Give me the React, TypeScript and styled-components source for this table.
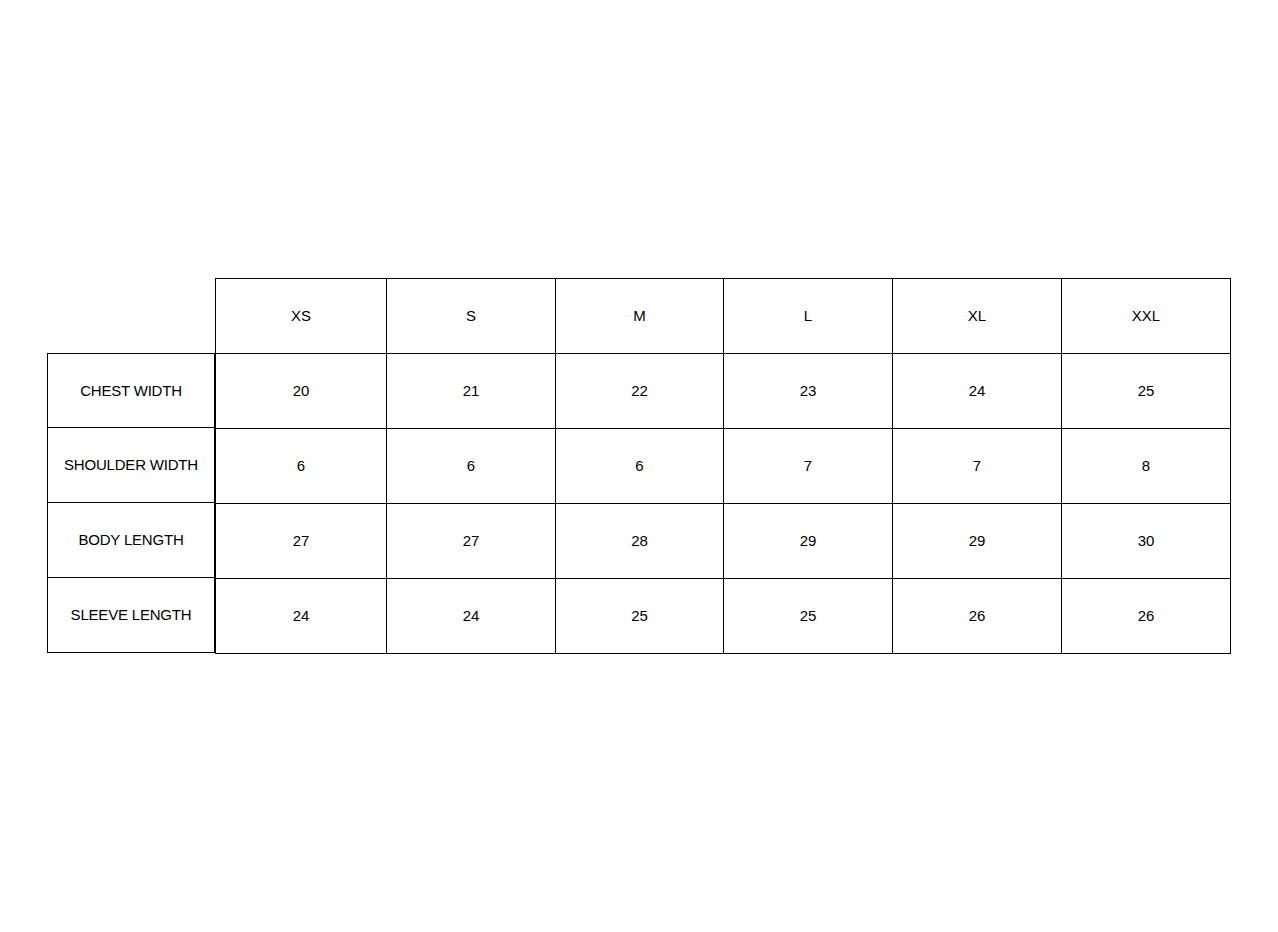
import React from "react";
import styled, { createGlobalStyle } from "styled-components";

const sizes = ["XS", "S", "M", "L", "XL", "XXL"];

const rows: { label: string; values: number[] }[] = [
  { label: "CHEST WIDTH", values: [20, 21, 22, 23, 24, 25] },
  { label: "SHOULDER WIDTH", values: [6, 6, 6, 7, 7, 8] },
  { label: "BODY LENGTH", values: [27, 27, 28, 29, 29, 30] },
  { label: "SLEEVE LENGTH", values: [24, 24, 25, 25, 26, 26] },
];

const App: React.FC = () => {
  return (
    <>
      <GlobalStyle />
      <Page>
        <Chart>
          <LabelColumn>
            {rows.map((row) => (
              <LabelCell key={row.label}>{row.label}</LabelCell>
            ))}
          </LabelColumn>
          <Grid>
            {sizes.map((size) => (
              <Cell key={size}>{size}</Cell>
            ))}
            {rows.map((row) =>
              row.values.map((value, i) => (
                <Cell key={row.label + i}>{value}</Cell>
              ))
            )}
          </Grid>
        </Chart>
      </Page>
    </>
  );
};

export default App;

const GlobalStyle = createGlobalStyle`
  html, body {
    margin: 0;
    padding: 0;
    background: #ffffff;
  }
  body {
    font-family: "Liberation Sans", Arial, sans-serif;
    color: #000000;
  }
`;

const Page = styled.div`
  width: 1278px;
  height: 932px;
  display: flex;
  align-items: center;
  justify-content: center;
`;

const Chart = styled.div`
  display: flex;
  align-items: flex-start;
`;

const LabelColumn = styled.div`
  width: 168px;
  padding-top: 75px;
  display: flex;
  flex-direction: column;
`;

const LabelCell = styled.div`
  height: 75px;
  box-sizing: border-box;
  border: 1px solid #000;
  border-top: none;
  padding-bottom: 1px;
  display: flex;
  align-items: center;
  justify-content: center;
  font-size: 15px;
  letter-spacing: -0.2px;

  &:first-child {
    border-top: 1px solid #000;
  }
`;

const Grid = styled.div`
  width: 1016px;
  display: grid;
  grid-template-columns: 171px 169px 168px 169px 169px 169px;
  grid-auto-rows: 75px;
  border-top: 1px solid #000;
  border-left: 1px solid #000;
  box-sizing: border-box;
`;

const Cell = styled.div`
  box-sizing: border-box;
  border-right: 1px solid #000;
  border-bottom: 1px solid #000;
  padding-bottom: 2px;
  display: flex;
  align-items: center;
  justify-content: center;
  font-size: 15px;
`;
